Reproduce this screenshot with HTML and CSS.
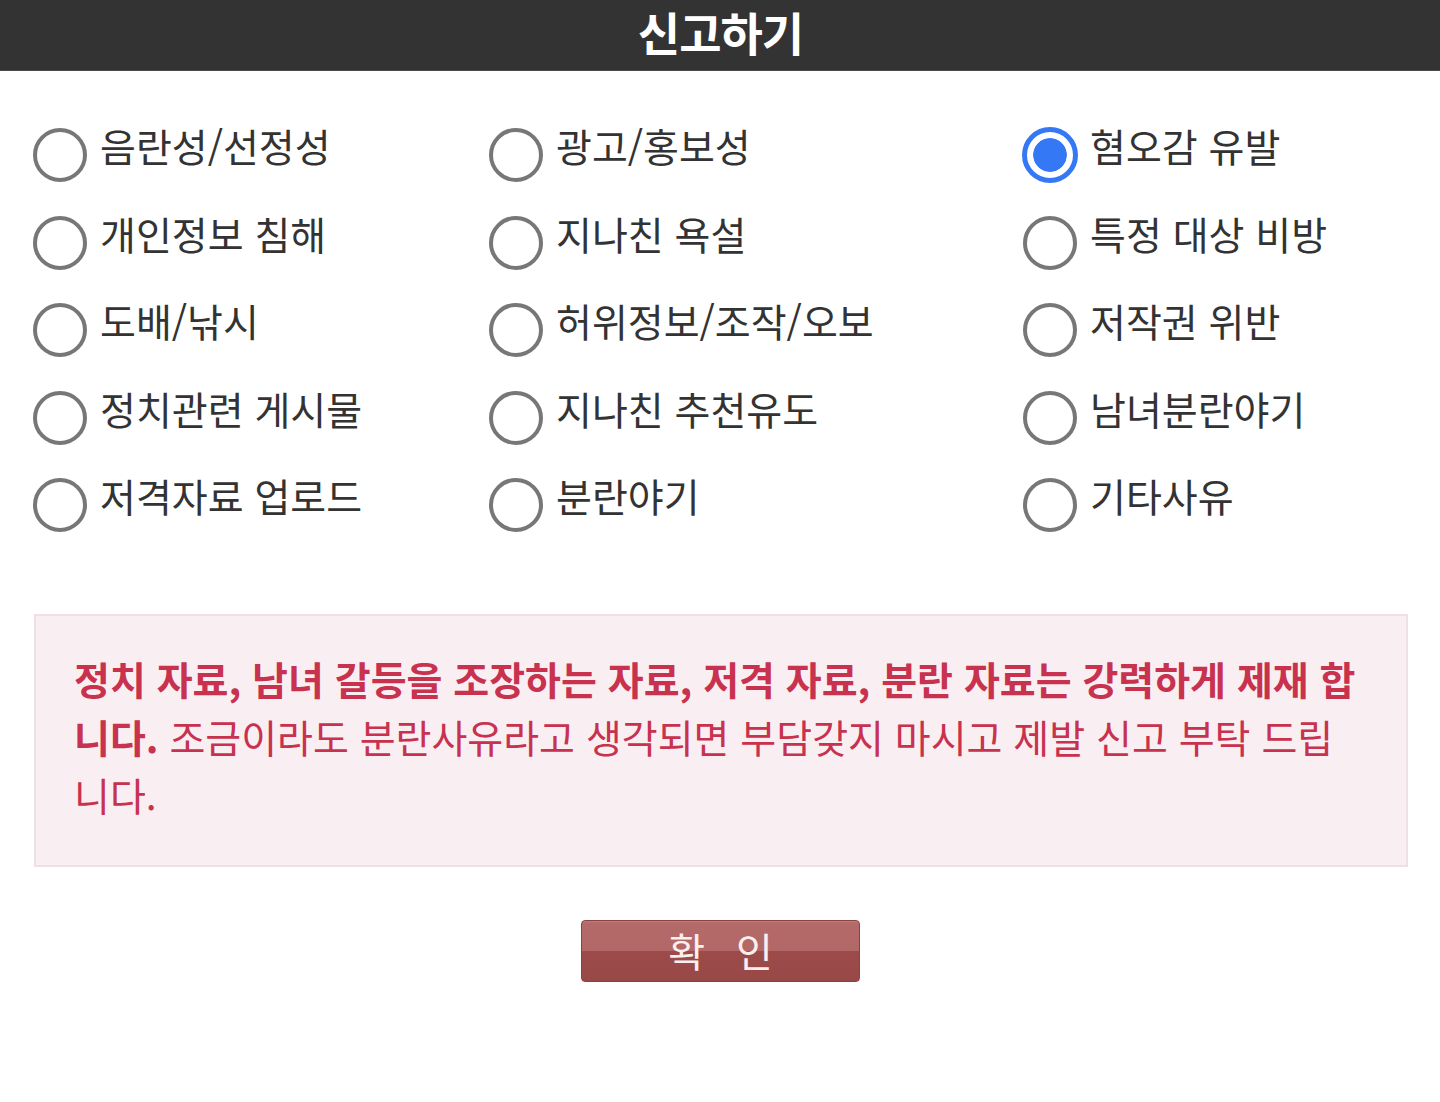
FILE: index.html
```html
<!DOCTYPE html>
<html lang="ko">
<head>
<meta charset="utf-8">
<title>신고하기</title>
<link rel="stylesheet" href="styles.css">
</head>
<body>
<header class="topbar"><h1 class="title">신고하기</h1></header>
<main>
  <div class="options">
    <label class="opt"><span class="radio"></span><span class="txt">음란성/선정성</span></label>
    <label class="opt"><span class="radio"></span><span class="txt">광고/홍보성</span></label>
    <label class="opt"><span class="radio checked"></span><span class="txt">혐오감 유발</span></label>
    <label class="opt"><span class="radio"></span><span class="txt">개인정보 침해</span></label>
    <label class="opt"><span class="radio"></span><span class="txt">지나친 욕설</span></label>
    <label class="opt"><span class="radio"></span><span class="txt">특정 대상 비방</span></label>
    <label class="opt"><span class="radio"></span><span class="txt">도배/낚시</span></label>
    <label class="opt"><span class="radio"></span><span class="txt">허위정보/조작/오보</span></label>
    <label class="opt"><span class="radio"></span><span class="txt">저작권 위반</span></label>
    <label class="opt"><span class="radio"></span><span class="txt">정치관련 게시물</span></label>
    <label class="opt"><span class="radio"></span><span class="txt">지나친 추천유도</span></label>
    <label class="opt"><span class="radio"></span><span class="txt">남녀분란야기</span></label>
    <label class="opt"><span class="radio"></span><span class="txt">저격자료 업로드</span></label>
    <label class="opt"><span class="radio"></span><span class="txt">분란야기</span></label>
    <label class="opt"><span class="radio"></span><span class="txt">기타사유</span></label>
  </div>
  <div class="notice"><strong>정치 자료, 남녀 갈등을 조장하는 자료, 저격 자료, 분란 자료는 강력하게 제재 합니다.</strong> 조금이라도 분란사유라고 생각되면 부담갖지 마시고 제발 신고 부탁 드립니다.</div>
  <div class="actions"><button class="ok" type="button"><span>확</span><span>인</span></button></div>
</main>
</body>
</html>
```
FILE: styles.css
```css
html, body {
  margin: 0;
  padding: 0;
  background: #ffffff;
  font-family: "Noto Sans CJK KR", "Noto Sans", sans-serif;
}

.topbar {
  height: 71px;
  background: #333333;
  border-bottom: 1px solid #4a4a4a;
  box-sizing: border-box;
  display: flex;
  justify-content: center;
  align-items: flex-start;
}

.title {
  margin: 0;
  padding: 0 0 0 1px;
  color: #ffffff;
  font-size: 46px;
  font-weight: 700;
  line-height: 62px;
  letter-spacing: -1px;
}

.options {
  display: grid;
  grid-template-columns: 456px 534px 1fr;
  grid-auto-rows: 87.5px;
  padding-left: 33px;
  margin-top: 55px;
}

.opt {
  display: flex;
  align-items: flex-start;
  gap: 13px;
}

.radio {
  flex: none;
  width: 54px;
  height: 54px;
  margin-top: 2px;
  box-sizing: border-box;
  border: 4px solid #777777;
  border-radius: 50%;
  background: #ffffff;
}

.radio.checked {
  width: 56px;
  height: 56px;
  margin-top: 1px;
  margin-left: -1px;
  margin-right: -1px;
  border: 5px solid #3478f6;
  padding: 6px;
  background: #3478f6;
  background-clip: content-box;
  box-shadow: inset 0 0 0 6px #ffffff;
}

.txt {
  color: #333333;
  font-size: 39px;
  line-height: 39px;
  white-space: nowrap;
}

.notice {
  margin: 50px 32px 0 34px;
  border: 2px solid #f0e0e3;
  background: #f9eff2;
  padding: 33px 48px 42px 38px;
  color: #c8324f;
  font-size: 39px;
  line-height: 58px;
}

.notice strong {
  font-weight: 700;
}

.actions {
  display: flex;
  justify-content: center;
  margin-top: 53px;
  padding-left: 1px;
}

.ok {
  width: 279px;
  height: 62px;
  box-sizing: border-box;
  border: 1px solid #8b4242;
  border-radius: 4px;
  background: linear-gradient(to bottom, #c07c7a 0, #b46a69 2px, #b26867 50%, #9c4b4a 50%, #984847 100%);
  display: flex;
  justify-content: center;
  align-items: center;
  gap: 31px;
  padding: 0 0 2px 0;
  color: #fbeeee;
  font-family: "Noto Sans CJK KR", sans-serif;
  font-size: 40px;
  line-height: 40px;
  font-weight: 400;
}
```
